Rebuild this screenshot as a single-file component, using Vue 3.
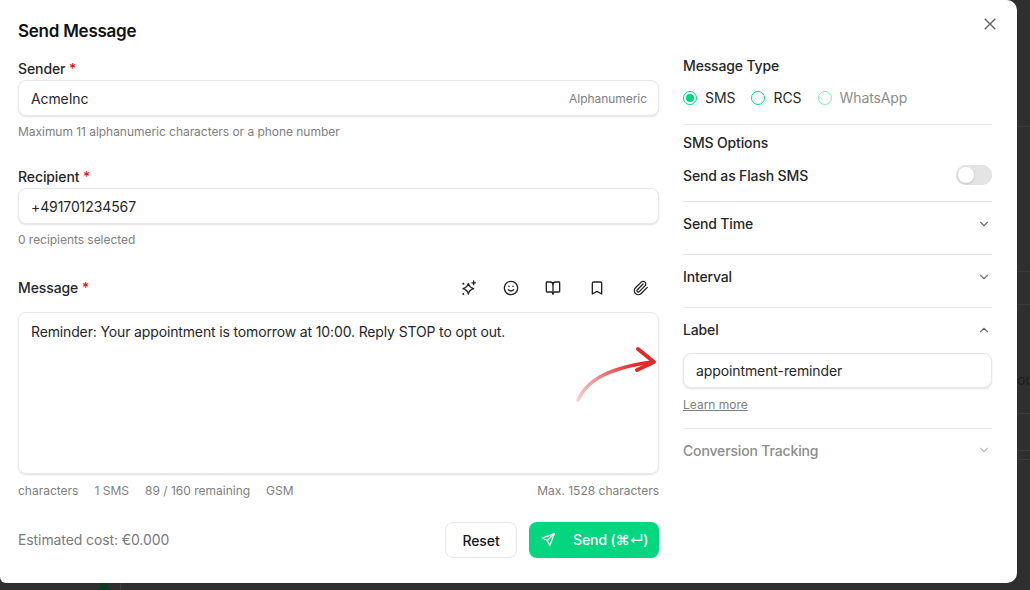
<script setup>
const stats = ['characters', '1 SMS', '89 / 160 remaining', 'GSM']
const bgLines = [126, 271, 304, 413, 450, 459]
</script>

<template>
  <div class="page">
    <div class="modal">
      <div class="left">
        <h1 class="title">Send Message</h1>

        <div class="field sender">
          <label class="label">Sender <span class="req">*</span></label>
          <div class="input">
            <span>AcmeInc</span>
            <span class="hint">Alphanumeric</span>
          </div>
          <p class="help">Maximum 11 alphanumeric characters or a phone number</p>
        </div>

        <div class="field recipient">
          <label class="label">Recipient <span class="req">*</span></label>
          <div class="input"><span>+491701234567</span></div>
          <p class="help">0 recipients selected</p>
        </div>

        <div class="message-head">
          <label class="label">Message <span class="req">*</span></label>
          <div class="tools">
            <svg class="tool" viewBox="0 0 24 24"><path d="M11 5C11.800 9.500 13.500 11.200 19 13C13.500 14.800 11.800 16.500 11 21C10.200 16.500 8.500 14.800 3 13C8.500 11.200 10.200 9.500 11 5z"/><path d="M19 1.500v5.500M16.300 4.200h5.400"/><path d="M3.500 5.500h.01M3.500 21h.01" stroke-width="3"/></svg>
            <svg class="tool" viewBox="0 0 24 24"><circle cx="12" cy="12" r="10"/><path d="M8 14.500s1.500 2 4 2 4-2 4-2"/><path d="M9 9.500h.01M15 9.500h.01" stroke-width="2.400"/></svg>
            <svg class="tool" viewBox="0 0 24 24"><path d="M12 7v14"/><path d="M3 18a1 1 0 0 1-1-1V4a1 1 0 0 1 1-1h5a4 4 0 0 1 4 4 4 4 0 0 1 4-4h5a1 1 0 0 1 1 1v13a1 1 0 0 1-1 1h-6a3 3 0 0 0-3 3 3 3 0 0 0-3-3z"/></svg>
            <svg class="tool spaced" viewBox="0 0 24 24"><path d="m19 21-7-4-7 4V5a2 2 0 0 1 2-2h10a2 2 0 0 1 2 2z"/></svg>
            <svg class="tool spaced" viewBox="0 0 24 24"><path d="m21.440 11.050-9.190 9.190a6 6 0 0 1-8.490-8.490l8.570-8.570A4 4 0 1 1 18 8.840l-8.590 8.570a2 2 0 0 1-2.830-2.830l8.490-8.480"/></svg>
          </div>
        </div>

        <div class="textarea">
          Reminder: Your appointment is tomorrow at 10:00. Reply STOP to opt out.
          <svg class="arrow" width="90" height="64" viewBox="0 0 90 64" fill="none">
            <defs>
              <linearGradient id="arrowFade" gradientUnits="userSpaceOnUse" x1="6" y1="59" x2="62" y2="22">
                <stop offset="0" stop-color="#f8cfcf" />
                <stop offset="0.5" stop-color="#ec7f7f" />
                <stop offset="1" stop-color="#e02b2b" />
              </linearGradient>
            </defs>
            <path d="M6 59C14 42 30 28 80 21" stroke="url(#arrowFade)" stroke-width="3.600" stroke-linecap="round" />
            <path d="M66 8 82 21 65 29" stroke="#e02b2b" stroke-width="4" stroke-linecap="round" stroke-linejoin="round" />
          </svg>
        </div>

        <div class="stats">
          <div class="stat-group">
            <span v-for="s in stats" :key="s">{{ s }}</span>
          </div>
          <span>Max. 1528 characters</span>
        </div>

        <div class="actions">
          <span class="cost">Estimated cost: €0.000</span>
          <div class="buttons">
            <button class="btn-reset">Reset</button>
            <button class="btn-send">
              <svg class="send-icon" viewBox="0 0 24 24"><path d="M21.500 2.500 2.500 9.500l7.500 4 4 8z"/><path d="M21.500 2.500 10 13.500"/></svg>
              <span>Send (⌘↵)</span>
            </button>
          </div>
        </div>
      </div>

      <div class="right">
        <div class="type-block">
          <div class="section-title">Message Type</div>
          <div class="radios">
            <div class="radio-item"><span class="radio on"></span>SMS</div>
            <div class="radio-item"><span class="radio"></span>RCS</div>
            <div class="radio-item disabled"><span class="radio"></span>WhatsApp</div>
          </div>
        </div>

        <div class="options-block">
          <div class="section-title">SMS Options</div>
          <div class="flash-row">
            <span>Send as Flash SMS</span>
            <span class="toggle"><span class="knob"></span></span>
          </div>
        </div>

        <div class="acc-row">
          <span>Send Time</span>
          <svg class="chev" viewBox="0 0 24 24"><path d="m6 9 6 6 6-6"/></svg>
        </div>
        <div class="acc-row">
          <span>Interval</span>
          <svg class="chev" viewBox="0 0 24 24"><path d="m6 9 6 6 6-6"/></svg>
        </div>

        <div class="label-block">
          <div class="acc-head">
            <span>Label</span>
            <svg class="chev" viewBox="0 0 24 24"><path d="m6 15 6-6 6 6"/></svg>
          </div>
          <div class="input label-input"><span>appointment-reminder</span></div>
          <a class="learn">Learn more</a>
        </div>

        <div class="acc-row muted">
          <span>Conversion Tracking</span>
          <svg class="chev" viewBox="0 0 24 24"><path d="m6 9 6 6 6-6"/></svg>
        </div>
      </div>

      <button class="close" aria-label="Close">
        <svg viewBox="0 0 24 24"><path d="M5 5l14 14M19 5 5 19"/></svg>
      </button>
    </div>

    <span class="bg-text">oc</span>
    <span v-for="y in bgLines" :key="y" class="bg-line" :style="{ top: y + 'px' }"></span>
    <span class="bg-dot"></span>
    <span class="bg-vline"></span>
  </div>
</template>

<style scoped>
.page {
  position: relative;
  width: 1030px;
  height: 590px;
  overflow: hidden;
  background: #2f2f2f;
  font-family: Inter, "DejaVu Sans", sans-serif;
  font-size: 14px;
  letter-spacing: -0.1px;
  color: #18181b;
}
.modal {
  position: relative;
  z-index: 1;
  width: 1017px;
  height: 583px;
  background: #fff;
  border-radius: 0 10px 10px 6px;
  display: flex;
  box-sizing: border-box;
}
.left {
  width: 641px;
  margin-left: 18px;
  padding-top: 19px;
  display: flex;
  flex-direction: column;
}
.title {
  margin: 0;
  font-size: 17px;
  line-height: 24px;
  font-weight: 600;
  letter-spacing: -0.25px;
  color: #111;
}
.field { display: flex; flex-direction: column; }
.sender { margin-top: 16px; }
.recipient { margin-top: 28px; }
.label {
  font-size: 14px;
  line-height: 20px;
  font-weight: 500;
  color: #27272a;
  display: block;
}
.req { color: #e5131d; }
.input {
  margin-top: 1px;
  height: 36px;
  box-sizing: border-box;
  padding: 0 11px 0 12px;
  border: 1px solid #e7e7e7;
  border-radius: 8px;
  background: #fff;
  box-shadow: 0 1px 2px rgba(0, 0, 0, 0.12);
  display: flex;
  align-items: center;
  justify-content: space-between;
  color: #27272a;
  font-size: 14px;
}
.hint { font-size: 12px; letter-spacing: -0.05px; color: #808080; }
.help {
  margin: 8px 0 0;
  font-size: 12px;
  line-height: 15px;
  letter-spacing: -0.04px;
  color: #808080;
}
.message-head {
  margin-top: 24px;
  height: 34px;
  display: flex;
  align-items: center;
  justify-content: space-between;
  margin-bottom: 7px;
}
.tools {
  display: flex;
  align-items: center;
  gap: 26px;
  margin-right: 10px;
}
.tool {
  width: 16px;
  height: 16px;
  fill: none;
  stroke: #222;
  stroke-width: 2;
  stroke-linecap: round;
  stroke-linejoin: round;
}
.tool.spaced { margin-left: 2px; }
.textarea {
  position: relative;
  height: 162px;
  box-sizing: border-box;
  padding: 9px 12px;
  border: 1px solid #e7e7e7;
  border-radius: 8px;
  box-shadow: 0 1px 2px rgba(0, 0, 0, 0.12);
  line-height: 20px;
  letter-spacing: -0.14px;
  color: #27272a;
}
.arrow {
  position: absolute;
  left: 553px;
  top: 28px;
}
.stats {
  margin-top: 9px;
  display: flex;
  justify-content: space-between;
  font-size: 12px;
  line-height: 15px;
  letter-spacing: 0;
  color: #808080;
}
.stat-group { display: flex; gap: 16px; }
.actions {
  margin-top: 24px;
  display: flex;
  align-items: center;
  justify-content: space-between;
}
.cost { font-size: 14px; padding-bottom: 2px; color: #7a7a7a; }
.buttons { display: flex; gap: 12px; }
.btn-reset,
.btn-send {
  height: 36px;
  box-sizing: border-box;
  border-radius: 8px;
  font-family: inherit;
  font-size: 14px;
  font-weight: 500;
  letter-spacing: -0.1px;
  cursor: pointer;
}
.btn-reset {
  width: 72px;
  border: 1px solid #e7e7e7;
  background: #fff;
  color: #18181b;
}
.btn-send {
  width: 130px;
  border: 0;
  background: #04d67f;
  color: #fff;
  display: flex;
  align-items: center;
  padding: 0 0 2px 12px;
  gap: 17px;
}
.send-icon {
  width: 15px;
  height: 15px;
  flex: none;
  fill: none;
  stroke: #fff;
  stroke-width: 2;
  stroke-linejoin: round;
  stroke-linecap: round;
}
.right {
  width: 309px;
  margin-left: 24px;
  padding-top: 56px;
  font-weight: 500;
  letter-spacing: -0.15px;
  color: #27272a;
}
.section-title { line-height: 20px; }
.radios {
  margin-top: 12px;
  display: flex;
  gap: 16px;
}
.radio-item {
  display: flex;
  align-items: center;
  gap: 8px;
  line-height: 20px;
  font-weight: 400;
  letter-spacing: -0.05px;
}
.radio {
  width: 14px;
  height: 14px;
  box-sizing: border-box;
  border: 1.500px solid #04d67f;
  border-radius: 50%;
  display: block;
  position: relative;
}
.radio.on::after {
  content: "";
  position: absolute;
  inset: 2px;
  border-radius: 50%;
  background: #04d67f;
}
.disabled { color: #8c8c8c; letter-spacing: -0.1px; }
.disabled .radio { opacity: 0.5; }
.type-block {
  height: 69px;
  box-sizing: border-box;
  border-bottom: 1px solid #e7e7e7;
}
.options-block {
  height: 77px;
  padding-top: 8px;
  box-sizing: border-box;
  border-bottom: 1px solid #e7e7e7;
}
.flash-row {
  margin-top: 12px;
  display: flex;
  align-items: center;
  justify-content: space-between;
  height: 20px;
}
.toggle {
  width: 36px;
  height: 20px;
  border-radius: 10px;
  background: #e4e4e4;
  position: relative;
  display: block;
  box-shadow: inset 0 0 1px rgba(0, 0, 0, 0.1);
}
.knob {
  position: absolute;
  left: 2px;
  top: 2px;
  width: 16px;
  height: 16px;
  border-radius: 50%;
  background: #fff;
  box-shadow: 0 1px 2px rgba(0, 0, 0, 0.15);
}
.acc-row {
  height: 53px;
  box-sizing: border-box;
  padding-bottom: 9px;
  border-bottom: 1px solid #e7e7e7;
  display: flex;
  align-items: center;
  justify-content: space-between;
}
.acc-row.muted {
  border-bottom: 0;
  padding-bottom: 0;
  height: 42px;
  color: #8c8c8c;
}
.chev {
  width: 14px;
  height: 14px;
  margin-right: 1px;
  fill: none;
  stroke: #6f6f6f;
  stroke-width: 2;
  stroke-linecap: round;
  stroke-linejoin: round;
}
.muted .chev { stroke: #bdbdbd; }
.label-block {
  height: 121px;
  box-sizing: border-box;
  border-bottom: 1px solid #e7e7e7;
}
.acc-head {
  height: 43px;
  display: flex;
  align-items: center;
  justify-content: space-between;
}
.label-input {
  margin-top: 2px;
  height: 35px;
  font-weight: 400;
  letter-spacing: -0.1px;
}
.learn {
  display: inline-block;
  margin-top: 9px;
  font-size: 12px;
  line-height: 15px;
  font-weight: 400;
  letter-spacing: 0;
  color: #808080;
  text-decoration: underline;
}
.close {
  position: absolute;
  top: 15px;
  right: 18px;
  width: 18px;
  height: 18px;
  padding: 0;
  border: 0;
  background: none;
}
.close svg {
  display: block;
  width: 18px;
  height: 18px;
  fill: none;
  stroke: #5f5f5f;
  stroke-width: 1.800;
}
.bg-text {
  position: absolute;
  left: 1017px;
  top: 371px;
  font-size: 14px;
  letter-spacing: 0;
  color: #1a1a1a;
}
.bg-line {
  position: absolute;
  left: 1017px;
  width: 13px;
  height: 1px;
  background: #3c3c3c;
}
.bg-dot {
  position: absolute;
  left: 98px;
  top: 583px;
  width: 12px;
  height: 12px;
  border-radius: 50%;
  background: #0b3a26;
}
.bg-vline {
  position: absolute;
  left: 120px;
  top: 583px;
  width: 1px;
  height: 7px;
  background: #3c3c3c;
}
</style>
